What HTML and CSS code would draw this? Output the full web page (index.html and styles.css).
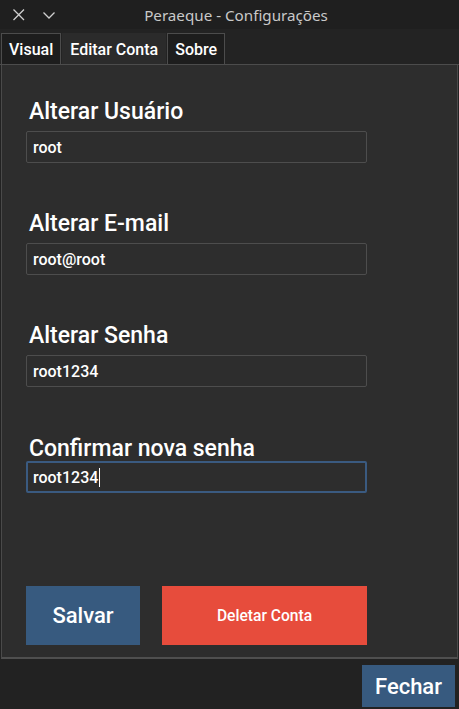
FILE: index.html
```html
<!DOCTYPE html>
<html lang="pt">
<head>
<meta charset="utf-8">
<title>Peraeque - Configurações</title>
<link rel="stylesheet" href="styles.css">
</head>
<body>
<div class="window">
  <header class="titlebar">
    <div class="tb-icons">
      <svg class="tb-icon" width="14" height="14" viewBox="0 0 14 14"><path d="M1.5 1.5 L12 12 M12 1.5 L1.5 12" stroke="#cfcfcf" stroke-width="1.3" fill="none"/></svg>
      <svg class="tb-icon" width="14" height="14" viewBox="0 0 14 14"><path d="M1.5 4.5 L7 10 L12.5 4.5" stroke="#cfcfcf" stroke-width="1.3" fill="none"/></svg>
    </div>
    <div class="tb-title">Peraeque - Configurações</div>
  </header>
  <nav class="tabs">
    <div class="tab">Visual</div>
    <div class="tab active">Editar Conta</div>
    <div class="tab">Sobre</div>
  </nav>
  <main class="panel">
    <div class="field">
      <label class="label">Alterar Usuário</label>
      <div class="input">root</div>
    </div>
    <div class="field">
      <label class="label">Alterar E-mail</label>
      <div class="input">root@root</div>
    </div>
    <div class="field">
      <label class="label">Alterar Senha</label>
      <div class="input">root1234</div>
    </div>
    <div class="field last">
      <label class="label">Confirmar nova senha</label>
      <div class="input focus">root1234<span class="caret"></span></div>
    </div>
    <div class="actions">
      <button class="btn save">Salvar</button>
      <button class="btn delete">Deletar Conta</button>
    </div>
  </main>
  <footer class="bottombar">
    <button class="btn close">Fechar</button>
  </footer>
</div>
</body>
</html>
```
FILE: styles.css
```css
* { box-sizing: border-box; }
html, body { margin: 0; padding: 0; background: #222222; }
.window {
  width: 459px;
  height: 709px;
  display: flex;
  flex-direction: column;
  background: #222222;
  font-family: Roboto, "Liberation Sans", sans-serif;
  color: #ffffff;
}
.titlebar {
  height: 29px;
  flex: none;
  display: flex;
  align-items: center;
  background: #1f1f1f;
}
.tb-icons {
  display: flex;
  gap: 16px;
  padding-left: 12px;
  align-items: center;
}
.tb-icon { display: block; }
.tb-title {
  flex: 1;
  text-align: center;
  font-family: "Noto Sans", sans-serif;
  font-size: 15.2px;
  color: #c9c9c9;
  margin-left: -23px;
  padding-right: 20px;
}
.tabs {
  height: 36px;
  flex: none;
  display: flex;
  align-items: flex-end;
  padding-left: 1px;
  background: #232323;
  border-bottom: 1px solid #4c4c4c;
}
.tab {
  height: 31px;
  border: 1px solid #4c4c4c;
  border-bottom: none;
  margin-right: 1px;
  padding: 0 7px 0 7px;
  display: flex;
  align-items: center;
  font-size: 16px;
  font-weight: 500;
  color: #ffffff;
  background: #1d1d1d;
}
.tab.active {
  background: #2b2b2b;
  border-color: #2b2b2b;
  padding: 0 7px;
}
.panel {
  flex: 1;
  background: #2d2d2d;
  margin: 0 1px;
  border-left: 1px solid #4a4a4a;
  border-right: 1px solid #4a4a4a;
  border-bottom: 2px solid #4f4f4f;
  padding: 32px 0 0 24px;
  display: flex;
  flex-direction: column;
}
.field {
  display: flex;
  flex-direction: column;
  width: 341px;
  margin-bottom: 46px;
}
.field:nth-child(3) { margin-bottom: 47px; }
.field.last { margin-bottom: 0; }
.label {
  font-size: 23px;
  font-weight: 500;
  line-height: 29px;
  margin-bottom: 5px;
  margin-left: 3px;
}
.field.last .label { margin-bottom: -2px; }
.input {
  height: 32px;
  border: 1px solid #4d4d4d;
  border-radius: 2px;
  padding: 0 6px;
  font-size: 16px;
  font-weight: 500;
  display: flex;
  align-items: center;
}
.input.focus { border: 2px solid #3a5a80; padding-left: 5px; }
.caret {
  display: inline-block;
  width: 1px;
  height: 19px;
  background: #ffffff;
  margin-left: 1px;
}
.actions {
  display: flex;
  gap: 22px;
  margin-top: 93px;
}
.btn {
  border: none;
  color: #ffffff;
  font-family: Roboto, "Liberation Sans", sans-serif;
  font-weight: 500;
  cursor: pointer;
}
.save {
  width: 114px;
  height: 59px;
  background: #375a7f;
  font-size: 22px;
}
.delete {
  width: 205px;
  height: 59px;
  background: #e74c3c;
  font-size: 15.6px;
}
.bottombar {
  height: 50px;
  flex: none;
  display: flex;
  justify-content: flex-end;
  align-items: flex-start;
  padding: 6px 4px 0 0;
  background: #222222;
}
.close {
  width: 93px;
  height: 42px;
  background: #375a7f;
  font-size: 22px;
}
```
